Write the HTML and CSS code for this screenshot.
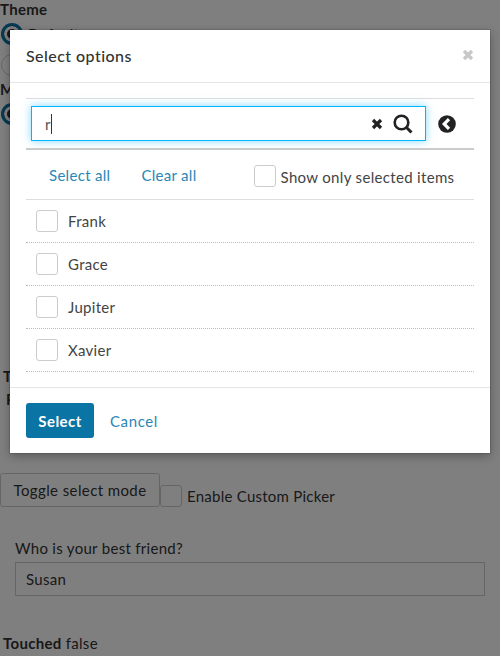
FILE: index.html
```html
<!DOCTYPE html>
<html lang="en">
<head>
    <meta charset="UTF-8">
    <meta name="viewport" content="width=device-width, initial-scale=1.0">
    <title>Select options</title>
    <link rel="stylesheet" href="styles.css">
</head>
<body>
    <div class="page">
        <div class="group-title">Theme</div>
        <div class="radio-row"><span class="radio checked"></span> Default</div>
        <div class="radio-row"><span class="radio"></span> Dark</div>
        <div class="group-title mode-title">Mode</div>
        <div class="radio-row"><span class="radio checked"></span> Single</div>
        <div class="page-gap"></div>
        <div class="hidden-title">Type</div>
        <div class="hidden-sub">Picker</div>
        <div class="toggle-row">
            <button class="toggle-btn">Toggle select mode</button>
            <span class="checkbox"></span>
            <span class="toggle-label">Enable Custom Picker</span>
        </div>
        <div class="friend">
            <label class="friend-label">Who is your best friend?</label>
            <div class="friend-input">Susan</div>
        </div>
        <div class="touched"><b>Touched</b> false</div>
    </div>

    <div class="overlay">
        <div class="modal">
            <div class="modal-header">
                <span class="modal-title">Select options</span>
                <svg class="modal-close" viewBox="0 0 12 12"><path d="M2 2l8 8M10 2l-8 8"/></svg>
            </div>
            <div class="modal-body">
                <div class="search-bar">
                    <div class="search-input">
                        <span class="search-text">r</span><span class="caret"></span>
                        <svg class="icon-clear" viewBox="0 0 12 12"><path d="M2 2l8 8M10 2l-8 8"/></svg>
                        <svg class="icon-search" viewBox="0 0 20 20"><circle cx="8.500" cy="8.500" r="6.800"/><path d="M13.500 13.500l5 5"/></svg>
                    </div>
                    <svg class="icon-back" viewBox="0 0 18 18"><circle cx="9" cy="9" r="8.800"/><path d="M11 4.200L6.200 9l4.800 4.800"/></svg>
                </div>
                <div class="select-actions">
                    <a class="link select-all">Select all</a>
                    <a class="link clear-all">Clear all</a>
                    <span class="checkbox"></span>
                    <span class="only-selected">Show only selected items</span>
                </div>
                <ul class="option-list">
                    <li class="option"><span class="checkbox"></span>Frank</li>
                    <li class="option"><span class="checkbox"></span>Grace</li>
                    <li class="option"><span class="checkbox"></span>Jupiter</li>
                    <li class="option"><span class="checkbox"></span>Xavier</li>
                </ul>
            </div>
            <div class="modal-footer">
                <button class="select-btn">Select</button>
                <a class="link cancel">Cancel</a>
            </div>
        </div>
    </div>
</body>
</html>
```

FILE: styles.css
```css
* {
    box-sizing: border-box;
}
html, body {
    margin: 0;
    height: 656px;
    overflow: hidden;
}
body {
    font-family: Lato, "Open Sans", sans-serif;
    font-size: 15px;
    letter-spacing: .3px;
    color: #333;
    background-color: #fff;
}

/* page behind the dialog */
.group-title {
    font-weight: 700;
    height: 18px;
    line-height: 18px;
}
.mode-title {
    margin-top: 0;
}
.radio-row {
    display: flex;
    align-items: center;
    gap: 5px;
    height: 31px;
    padding-left: 1px;
}
.radio {
    width: 22px;
    height: 22px;
    border-radius: 50%;
    border: 1px solid #ccc;
    background-color: #fff;
}
.radio.checked {
    border: 3px solid #0a74a5;
    box-shadow: inset 0 0 0 3px #fff;
    background-color: #333;
}
.page-gap {
    height: 238px;
}
.hidden-title {
    font-weight: 700;
    padding-left: 3px;
    height: 23px;
}
.hidden-sub {
    font-weight: 700;
    padding-left: 6px;
    height: 83px;
}
.toggle-row {
    display: flex;
    align-items: flex-start;
}
.toggle-btn {
    width: 160px;
    height: 34px;
    padding: 0;
    font: inherit;
    letter-spacing: .4px;
    color: #333;
    background-color: #fff;
    border: 1px solid #ccc;
    border-radius: 3px;
}
.toggle-row .checkbox {
    margin-top: 12px;
}
.toggle-label {
    margin: 14px 0 0 5px;
    line-height: 18px;
    letter-spacing: .25px;
}
.friend {
    padding: 0 15px;
    margin-top: 32px;
}
.friend-label {
    display: block;
    line-height: 18px;
    margin-bottom: 5px;
}
.friend-input {
    height: 34px;
    line-height: 32px;
    padding: 0 10px;
    border: 1px solid #ccc;
}
.touched {
    margin: 38px 0 0 3px;
    line-height: 18px;
}

.checkbox {
    flex: none;
    display: inline-block;
    width: 22px;
    height: 22px;
    border: 1px solid #ccc;
    border-radius: 3px;
    background-color: #fff;
}

/* dialog */
.overlay {
    position: absolute;
    top: 0;
    left: 0;
    width: 500px;
    height: 656px;
    background-color: rgba(0, 0, 0, .5);
}
.modal {
    position: absolute;
    top: 30px;
    left: 10px;
    width: 480px;
    height: 423px;
    background-color: #fff;
    box-shadow: 0 0 0 1px rgba(0, 0, 0, .1), 0 3px 9px rgba(0, 0, 0, .3);
}
.modal-header {
    display: flex;
    align-items: center;
    justify-content: space-between;
    height: 53px;
    padding: 0 16px 2px;
    border-bottom: 1px solid #e5e5e5;
}
.modal-title {
    font-size: 16px;
    font-weight: 500;
    letter-spacing: .45px;
}
.modal-close {
    width: 12px;
    height: 12px;
}
.modal-close path {
    fill: none;
    stroke: #c8c8c8;
    stroke-width: 3.400;
}
.modal-body {
    padding: 15px 16px 0;
    color: #444;
}
.search-bar {
    display: flex;
    align-items: center;
    height: 52px;
    padding: 0 5px;
    border-top: 1px solid #ddd;
    border-bottom: 2px solid #ccc;
}
.search-input {
    display: flex;
    align-items: center;
    width: 395px;
    height: 35px;
    padding: 0 12px 0 13px;
    border: 1px solid #00b7ff;
    box-shadow: 0 0 8px rgba(0, 183, 255, .5);
}
.search-text {
    color: #555;
}
.caret {
    width: 1px;
    height: 20px;
    background-color: #333;
    margin-right: auto;
}
.icon-clear {
    width: 12px;
    height: 12px;
    margin-right: 10px;
}
.icon-clear path {
    fill: none;
    stroke: #222;
    stroke-width: 3.200;
}
.icon-search {
    width: 20px;
    height: 20px;
}
.icon-search circle, .icon-search path {
    fill: none;
    stroke: #222;
    stroke-width: 2.600;
}
.icon-search path {
    stroke-width: 3;
}
.icon-back {
    width: 18px;
    height: 18px;
    margin-left: 12px;
}
.icon-back circle {
    fill: #222;
}
.icon-back path {
    fill: none;
    stroke: #fff;
    stroke-width: 3.200;
}
.select-actions {
    display: flex;
    align-items: center;
    height: 50px;
    padding-left: 23px;
    border-bottom: 1px solid #ddd;
}
.link {
    color: #2a86b5;
}
.clear-all {
    margin-left: 31px;
}
.select-actions .checkbox {
    margin-left: 57px;
    margin-top: 3px;
}
.only-selected {
    margin: 4px 0 0 5px;
    letter-spacing: .33px;
}
.option-list {
    list-style: none;
    margin: 0;
    padding: 0;
}
.option {
    display: flex;
    align-items: center;
    gap: 10px;
    height: 43px;
    padding-left: 10px;
    border-bottom: 1px dotted #bbb;
}
.modal-footer {
    display: flex;
    align-items: center;
    gap: 16px;
    margin-top: 15px;
    height: 66px;
    padding: 0 16px;
    border-top: 1px solid #e5e5e5;
}
.select-btn {
    width: 68px;
    height: 35px;
    padding: 0;
    font: inherit;
    font-weight: 700;
    letter-spacing: .45px;
    color: #fff;
    background-color: #0a74a5;
    border: none;
    border-radius: 3px;
}
.cancel {
    letter-spacing: .6px;
}
```
